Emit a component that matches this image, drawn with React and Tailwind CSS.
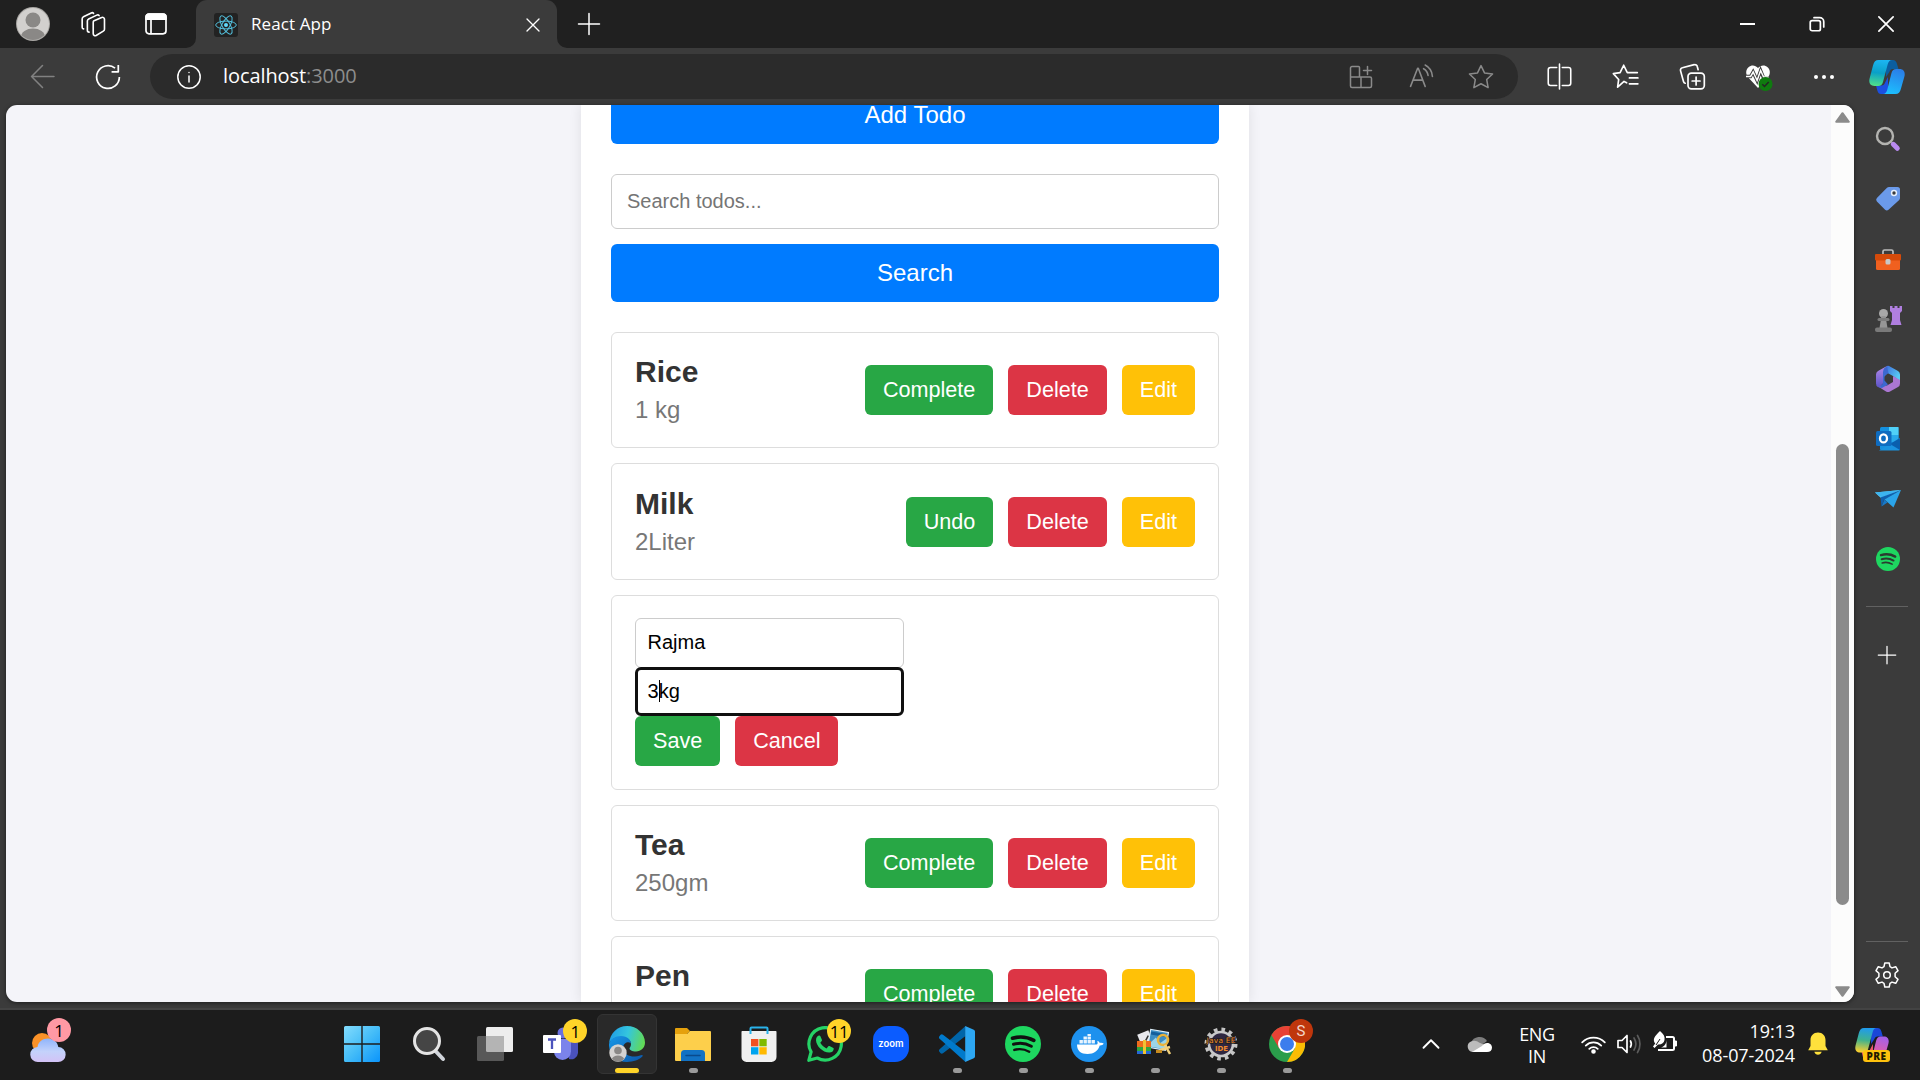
import React from "react";

/* ---------- line icons for the browser frame ---------- */

function Line({ size = 24, w = 1.5, className = "", children }) {
  return (
    <svg width={size} height={size} viewBox="0 0 24 24" fill="none" stroke="currentColor" strokeWidth={w} strokeLinecap="round" strokeLinejoin="round" className={"shrink-0 " + className}>
      {children}
    </svg>
  );
}

const Avatar = ({ size = 34 }) => (
  <svg width={size} height={size} viewBox="0 0 34 34" className="shrink-0">
    <defs>
      <clipPath id="avatarClip"><circle cx="17" cy="17" r="16" /></clipPath>
    </defs>
    <circle cx="17" cy="17" r="17" fill="#a9a7a4" />
    <circle cx="17" cy="17" r="16" fill="#d2d0ce" />
    <g clipPath="url(#avatarClip)" fill="#8a8886">
      <circle cx="17" cy="13" r="7.5" />
      <ellipse cx="17" cy="30" rx="12" ry="8.5" />
    </g>
  </svg>
);

const Workspaces = () => (
  <Line size={26} w={1.5}>
    <path d="M12.500 9.200 20 6a1.800 1.800 0 0 1 2.600 1.600v9.200c0 .8-.4 1.400-1.100 1.800l-6.600 4c-1.200.6-2.700 0-2.700-1.500V10.500c0-.6 0-1 .3-1.300z" />
    <path d="M8.400 19.500c-1 0-1.600-.7-1.600-1.700V9.300c0-.8.4-1.500 1.200-1.900L15.500 3.800c.8-.4 1.600-.2 2.100.4" />
    <path d="M3.300 16.500c-.8-.1-1.300-.7-1.300-1.600V7.300c0-.8.4-1.500 1.200-1.900l7.200-3.600c.8-.4 1.600-.2 2.100.4" />
  </Line>
);

const VerticalTabs = () => (
  <Line size={24} w={1.7}>
    <rect x="2" y="2.200" width="20" height="19.600" rx="3" />
    <path d="M2 5a3 3 0 0 1 3-2.800h14A3 3 0 0 1 22 5v2.200H2z" fill="currentColor" />
    <path d="M7 7v14.500" />
  </Line>
);

const ReactMark = () => (
  <svg width="24" height="24" viewBox="0 0 24 24" className="shrink-0">
    <rect width="24" height="24" rx="3" fill="#222222" />
    <g fill="none" stroke="#53c1de" strokeWidth="1">
      <ellipse cx="12" cy="12" rx="10.300" ry="3.900" />
      <ellipse cx="12" cy="12" rx="10.300" ry="3.900" transform="rotate(60 12 12)" />
      <ellipse cx="12" cy="12" rx="10.300" ry="3.900" transform="rotate(120 12 12)" />
    </g>
    <circle cx="12" cy="12" r="2" fill="#61dafb" />
  </svg>
);

const STAR = "M12 2.200l3 6.300 6.900.9-5 4.800 1.200 6.900L12 17.800l-6.100 3.300 1.200-6.900-5-4.800 6.900-.9z";

const HeartPulse = () => (
  <svg width="28" height="28" viewBox="0 0 28 28">
    <path d="M13 25 3.300 14.500C.4 11.300.6 6.700 3.500 4.200 6.500 1.500 10.400 2 13 5c2.600-3 6.700-3.500 9.600-.8 2.900 2.500 3 7.100.2 10.300z" fill="#fff" />
    <path d="M.5 13.500h5l2.600-4.500 4 8.500 3.500-10 3 7.500h7" fill="none" stroke="#3b3b3b" strokeWidth="3.400" />
    <path d="M1 13.500h4.600L8.200 9l3.900 8.500 3.500-10 3 6.500h5" fill="none" stroke="#fff" strokeWidth="1.500" />
    <circle cx="20.500" cy="21" r="7" fill="#0f7b0f" />
    <path d="M17.300 21.300l2.200 2.200 4.200-4.600" fill="none" stroke="#242424" strokeWidth="1.500" />
  </svg>
);

function CopilotMark({ size, id, colors, className = "" }) {
  return (
    <svg width={size} height={size} viewBox="0 0 36 36" className={"shrink-0 " + className}>
      <defs>
        <linearGradient id={id + "a"} x1=".5" y1="0" x2=".4" y2="1">
          <stop offset="0" stopColor={colors[0]} /><stop offset=".5" stopColor={colors[1]} /><stop offset="1" stopColor={colors[2]} />
        </linearGradient>
        <linearGradient id={id + "b"} x1=".6" y1="0" x2=".3" y2="1">
          <stop offset="0" stopColor={colors[3]} /><stop offset="1" stopColor={colors[4]} />
        </linearGradient>
      </defs>
      <path d="M17 1h7c2 0 3.200 1.300 3.800 3.300L29.500 10H24c-2 0-3 1.200-3.600 3L17 18z" fill={colors[5]} />
      <path d="M19 35h-7c-2 0-3-1.300-3.600-3.300L7 26.500h5.500c2 0 3-1.200 3.600-3L19 18z" fill={colors[6]} />
      <path d="M9.500 1H23c-2.400 0-3.500 1.700-4.200 4L14 23c-.7 2.600-2.200 4-4.800 4H5.500C1 27-.4 23.500.6 19.500L4 6.500C5 2.800 6.500 1 9.500 1z" fill={"url(#" + id + "a)"} />
      <path d="M26.500 35H14c2.400 0 3.500-1.700 4.200-4L22.500 14c.7-2.600 2.200-4 4.800-4h3.200c4.500 0 5.900 3.500 4.900 7.500L32 29.500C31 33.200 29.500 35 26.500 35z" fill={"url(#" + id + "b)"} />
    </svg>
  );
}

const SpotifyMark = ({ size, bar = "#1c1c1c" }) => (
  <svg width={size} height={size} viewBox="0 0 36 36" className="shrink-0">
    <circle cx="18" cy="18" r="18" fill="#1ed760" />
    <g fill="none" stroke={bar} strokeLinecap="round">
      <path d="M7.500 12.200c7-2 15-1.300 21.300 2.200" strokeWidth="3.600" />
      <path d="M8.500 18.300c6-1.700 12.500-1 17.800 2" strokeWidth="3" />
      <path d="M9.300 23.900c5-1.400 10.300-.8 14.900 1.800" strokeWidth="2.400" />
    </g>
  </svg>
);

/* ---------- browser chrome ---------- */

function TitleBar() {
  return (
    <div className="flex h-12 shrink-0 items-center bg-[#202020] text-white">
      <div className="flex w-[66px] justify-center"><Avatar /></div>
      <div className="flex w-[54px] justify-center"><Workspaces /></div>
      <div className="flex w-[72px] justify-center"><VerticalTabs /></div>
      <div className="relative ml-1 flex h-12 w-[361px] items-center rounded-t-[11px] bg-[#3b3b3b] pl-[18px] pr-[16px]">
        <svg width="10" height="10" viewBox="0 0 10 10" className="absolute -left-[10px] bottom-0"><path d="M10 0v10H0A10 10 0 0 0 10 0z" fill="#3b3b3b" /></svg>
        <svg width="10" height="10" viewBox="0 0 10 10" className="absolute -right-[10px] bottom-0"><path d="M0 0v10h10A10 10 0 0 1 0 0z" fill="#3b3b3b" /></svg>
        <div className="mt-[2px]"><ReactMark /></div>
        <span className="ml-[13px] text-[17px] leading-6 tracking-[0.1px]">React App</span>
        <Line size={16} w={2} className="ml-auto mt-[2px]"><path d="M3 3l18 18M21 3 3 21" /></Line>
      </div>
      <Line size={24} w={1.5} className="ml-[20px] mb-[1px]"><path d="M12 1.500v21M1.500 12h21" /></Line>
      <div className="ml-auto flex items-center">
        <div className="flex w-[69px] justify-center"><div className="h-[2px] w-[15px] bg-white" /></div>
        <div className="flex w-[69px] justify-center">
          <Line size={18} w={2.300}><rect x="3" y="7.500" width="13.500" height="13.500" rx="2.500" /><path d="M8 3.500h7.500a5.500 5.500 0 0 1 5.500 5.500v7" /></Line>
        </div>
        <div className="flex w-[69px] justify-center"><Line size={18} w={2.300}><path d="M2.500 2.500l19 19M21.500 2.500l-19 19" /></Line></div>
      </div>
    </div>
  );
}

function ToolBar() {
  return (
    <div className="flex h-[57px] shrink-0 items-center text-white">
      <div className="flex w-[84px] justify-center pb-[1px] text-[#818181]"><Line size={25}><path d="M23 12H1.500M12 1.500 1.500 12 12 22.500" /></Line></div>
      <div className="flex w-[48px] justify-center">
        <Line size={26} w={1.600}><path d="M22.500 12A10.500 10.500 0 1 1 18.500 3.800M21.500 1v6.200h-6.200" strokeLinecap="butt" /></Line>
      </div>
      <div className="ml-[18px] flex h-[45px] w-[1368px] items-center rounded-full bg-[#2b2b2b] pl-[27px]">
        <Line size={24} w={1.500}><circle cx="12" cy="12" r="11.200" /><path d="M12 11v6M12 7.500v.1" /></Line>
        <span className="-mt-[1px] ml-[22px] text-[20px] leading-6 tracking-[-0.08px]">localhost<span className="text-[#8d8d8d]">:3000</span></span>
        <div className="ml-auto flex items-center pr-[7px] text-[#8a8a8a]">
          <div className="flex w-[60px] justify-center">
            <Line size={24} w={1.500}><path d="M10.500 12V2.500a1 1 0 0 0-1-1H3a1.500 1.500 0 0 0-1.500 1.500v18A1.500 1.500 0 0 0 3 22.500h18a1.500 1.500 0 0 0 1.500-1.500v-7.500a1.500 1.500 0 0 0-1.500-1.500H1.500M12 12v10.500M18.500 1.500v8M14.500 5.500h8" /></Line>
          </div>
          <div className="flex w-[60px] justify-center">
            <Line size={25} w={1.500}><path d="M1.500 21.500 8.300 4h.6l6.600 17.500M4 15.500h9.200M14 4.500c2.600 1.400 3.900 3.400 4.300 6.500M15.500 1c4.200 2.200 6.700 6 7 11" /></Line>
          </div>
          <div className="flex w-[60px] justify-center"><Line size={28} w={1.300}><path d={STAR} /></Line></div>
        </div>
      </div>
      <div className="ml-[8px] flex items-center">
        <div className="flex w-[66px] justify-center"><Line size={27} w={1.400}><path d="M12 1v22M9.500 4H4a2 2 0 0 0-2 2v12a2 2 0 0 0 2 2h5.500M14.500 4H20a2 2 0 0 1 2 2v12a2 2 0 0 1-2 2h-5.500" /></Line></div>
        <div className="flex w-[67px] justify-center">
          <Line size={27} w={1.500}><path d="M13 17.600l-2.300-1.200L5 21.500l.9-6.800L1.200 9.500l6-1L10.400 2l3.200 6.500h8.900M15.500 13.300h7.500M15.500 18.500h7.500" /></Line>
        </div>
        <div className="flex w-[66px] justify-center">
          <Line size={27} w={1.500}><rect x="8" y="9" width="14.500" height="14" rx="3" /><path d="M15.200 12.500v7M11.700 16h7M17 6l-.7-2.700A2.200 2.200 0 0 0 13.500 1.500L3 4.200A2.200 2.200 0 0 0 1.400 7L4 16.500c.2.800.8 1.300 1.500 1.500" /></Line>
        </div>
        <div className="flex w-[68px] justify-center"><HeartPulse /></div>
        <div className="flex w-[62px] justify-center gap-[4px]">
          <i className="size-[4px] rounded-full bg-white" /><i className="size-[4px] rounded-full bg-white" /><i className="size-[4px] rounded-full bg-white" />
        </div>
        <div className="flex w-[64px] justify-center">
          <CopilotMark size={36} id="edgeCo" colors={["#1cb5f2", "#0aa0c8", "#4fe08a", "#2a7fe8", "#1cc0ff", "#0b5ea0", "#1c4fe0"]} />
        </div>
      </div>
    </div>
  );
}

/* ---------- side bar icons ---------- */

const sideIcons = [
  <svg width="26" height="26" viewBox="0 0 26 26">
    <path d="M15.500 15.500l3 3" stroke="#8a8a8a" strokeWidth="2" />
    <path d="M18.300 18.300l4 4" stroke="#b98af0" strokeWidth="5" strokeLinecap="round" />
    <circle cx="10" cy="10" r="8" fill="none" stroke="#b3b3b0" strokeWidth="2.400" />
  </svg>,
  <svg width="26" height="26" viewBox="0 0 26 26">
    <path d="M14 1h8.500A2.500 2.500 0 0 1 25 3.500V12c0 .8-.3 1.400-.8 2L13.500 23.700a2.500 2.500 0 0 1-3.400 0L1.900 15.500a2.500 2.500 0 0 1 0-3.400L12 1.800c.6-.5 1.200-.8 2-.8z" fill="#6b9aea" />
    <circle cx="19" cy="7" r="3.200" fill="#e6eefc" /><circle cx="19" cy="7" r="1.700" fill="#3b3b3b" />
  </svg>,
  <svg width="28" height="28" viewBox="0 0 28 28">
    <path d="M9 10V6.500A1.500 1.500 0 0 1 10.500 5h7A1.500 1.500 0 0 1 19 6.500V10" fill="none" stroke="#bdbdbd" strokeWidth="1.700" />
    <rect x="2" y="13" width="24" height="12" rx="1.500" fill="#f0601f" />
    <rect x="1" y="9" width="26" height="6.500" rx="1" fill="#d54a0a" />
    <rect x="11.500" y="14" width="5" height="5.500" rx="1.500" fill="#c8c8c8" />
  </svg>,
  <svg width="28" height="28" viewBox="0 0 28 28">
    <path d="M16 1h2.500v2h2V1h3v2h2V1H28v5l-2 2v7l1.500 5h-11l1.500-5V8l-2-2z" fill="#b07fe0" />
    <circle cx="9.500" cy="8.500" r="4.500" fill="#a8a8a8" /><path d="M7.500 11h4l2 12h-8z" fill="#969696" />
    <rect x="3.500" y="13" width="12" height="3" rx="1.500" fill="#7d7d7d" /><rect x="1" y="22.500" width="17" height="4.500" rx="2" fill="#7a7a7a" />
  </svg>,
  <svg width="28" height="28" viewBox="0 0 28 28">
    <defs>
      <linearGradient id="m1" x1="0" y1="0" x2="0" y2="1"><stop offset="0" stopColor="#b58ae8" /><stop offset="1" stopColor="#5c54c8" /></linearGradient>
      <linearGradient id="m2" x1="0" y1="0" x2="1" y2=".6"><stop offset="0" stopColor="#3a60d8" /><stop offset="1" stopColor="#58cdf5" /></linearGradient>
    </defs>
    <path d="M13 1q1-.5 2 0l9 5q2 1 2 3.500V16l-7-5-5.500-3L9 13z" fill="url(#m2)" />
    <path d="M2.500 20.500 12 26.500q2 1 4 0l8-4.500q2-1 2-3.500V15l-7-4v6l-6 3.500z" fill="#ab77d2" />
    <path d="M13 1 4 6Q2 7 2 9.500v9Q2 21 4 22l1 .5 4-4V8z" fill="url(#m1)" />
    <path d="M13 1 10 3.500Q9 5 9 8v10.500L5 22.500 8 23l6-3.500-3.500-4V11l4-3z" fill="#3c68d0" />
  </svg>,
  <svg width="26" height="26" viewBox="0 0 26 26">
    <rect x="5" y="1" width="18.500" height="23" rx="1.500" fill="#1490df" /><rect x="14" y="1" width="9.500" height="8" fill="#50d0f8" /><path d="M14 9h9.500v7H14z" fill="#28a8ea" />
    <path d="M4 24.500 25 12v11a1.500 1.500 0 0 1-1.500 1.500z" fill="#1a93e0" /><path d="M25 12v12L15 18z" fill="#0a5fae" />
    <rect x="1" y="5" width="15.500" height="15" rx="1.500" fill="#0f6cc0" />
    <ellipse cx="8.500" cy="12.400" rx="3.500" ry="4" fill="none" stroke="#fff" strokeWidth="2.300" />
  </svg>,
  <svg width="28" height="28" viewBox="0 0 28 28">
    <path d="M1 7.500 27 5 8 14z" fill="#5fd0fa" /><path d="M1 7.500 27 5 7.500 12.500z" fill="#3cb4f0" />
    <path d="M6.500 12.500 27 5 10 15l-2.500 6.500z" fill="#0f5fae" /><path d="M10.500 14.500 27 5l-7.500 17.500z" fill="#2aa4ea" /><path d="M7.500 21.500l3-7 3 3z" fill="#1779c8" />
  </svg>,
  <SpotifyMark size={24} bar="#2b3b30" />,
];

function SideBar() {
  return (
    <div className="flex w-[42px] shrink-0 flex-col items-center pt-[4px] text-white">
      {sideIcons.map((icon, i) => (
        <div key={i} className="flex h-[60px] items-center pl-[1px] last:pl-0">{icon}</div>
      ))}
      <div className="mt-[17px] h-px w-full bg-[#616161]" />
      <Line size={20} w={1.500} className="mt-[38px]"><path d="M12 1.500v21M1.500 12h21" /></Line>
      <div className="mt-auto h-px w-full bg-[#616161]" />
      <svg width="28" height="28" viewBox="0 0 28 28" fill="none" stroke="#fff" strokeWidth="1.500" strokeLinejoin="round" className="mt-[19px] mb-[13px] shrink-0">
        <path d="M11.800 2h4.400l.8 3.700 2 1.200 3.700-1.200 2.300 3.900-2.900 2.700v3.400l2.900 2.700-2.300 3.900L19 21.100l-2 1.200-.8 3.700h-4.400l-.8-3.700-2-1.200-3.700 1.200L3 18.400l2.900-2.700v-3.400L3 9.600l2.300-3.900L9 6.900l2-1.200z" />
        <circle cx="14" cy="14" r="3.300" />
      </svg>
    </div>
  );
}

/* ---------- todo app ---------- */

const TONES = {
  green: "bg-[#28a745]",
  red: "bg-[#dc3545]",
  yellow: "bg-[#ffc107]",
};

function ActionButton({ tone, children }) {
  return (
    <button className={"h-[50px] rounded-[6px] px-[18px] text-[21.600px] leading-[50px] text-white " + TONES[tone]}>
      {children}
    </button>
  );
}

function TodoItem({ title, amount, done }) {
  return (
    <li className={"flex shrink-0 items-center justify-between rounded-[6px] border border-[#dddddd] px-[23px] " + (done ? "h-[117px]" : "h-[116px]")}>
      <div className="mb-[2px]">
        <h3 className="text-[30px] font-bold leading-[34px] text-[#333333]">{title}</h3>
        <p className="mt-[7px] h-[27px] text-[24px] leading-[27px] text-[#777777]">{amount}</p>
      </div>
      <div className="flex gap-[15px]">
        <ActionButton tone="green">{done ? "Undo" : "Complete"}</ActionButton>
        <ActionButton tone="red">Delete</ActionButton>
        <ActionButton tone="yellow">Edit</ActionButton>
      </div>
    </li>
  );
}

function TodoEditor() {
  return (
    <li className="flex h-[195px] shrink-0 flex-col rounded-[6px] border border-[#dddddd] px-[23px] pt-[22px]">
      <div className="h-[50px] w-[269px] rounded-[6px] border border-[#cccccc] px-[11.500px] text-[20px] leading-[47px] text-black">Rajma</div>
      <div className="relative -mt-[1px] flex h-[49px] w-[269px] items-center rounded-[6px] border-[3px] border-[#101010] bg-white px-[9.500px] pb-[2px] text-[20px] leading-[22px] text-black">
        3<span className="-mr-px h-[22px] w-px bg-black" />kg
      </div>
      <div className="flex gap-[15px]">
        <ActionButton tone="green">Save</ActionButton>
        <ActionButton tone="red">Cancel</ActionButton>
      </div>
    </li>
  );
}

function TodoApp() {
  return (
    <main className="ml-[575px] flex h-full w-[668px] flex-col bg-white px-[30px] font-['Liberation_Sans',Arial,sans-serif] shadow-[0_0_12px_rgba(0,0,0,0.09)]">
      <button className="-mt-[19px] h-[58px] shrink-0 rounded-[6px] bg-[#007bff] text-[24px] leading-[58px] text-white">Add Todo</button>
      <div className="mt-[30px] h-[55px] shrink-0 rounded-[6px] border border-[#cccccc] px-[15px] text-[20px] leading-[52px] text-[#757575]">Search todos...</div>
      <button className="mt-[15px] h-[58px] shrink-0 rounded-[6px] bg-[#007bff] text-[24px] leading-[58px] text-white">Search</button>
      <ul className="mt-[30px] flex flex-col gap-[15px]">
        <TodoItem title="Rice" amount="1 kg" />
        <TodoItem title="Milk" amount="2Liter" done />
        <TodoEditor />
        <TodoItem title="Tea" amount="250gm" />
        <TodoItem title="Pen" />
      </ul>
    </main>
  );
}

function PageView() {
  return (
    <div className="flex h-[897px] w-[1848px] shrink-0 overflow-hidden rounded-[11px] bg-[#f4f4f9] shadow-[0_1px_4px_rgba(0,0,0,0.5)]">
      <div className="h-full flex-1 overflow-hidden"><TodoApp /></div>
      <div className="flex w-[23px] flex-col items-center bg-[#fcfcfc]">
        <svg width="15" height="11" viewBox="0 0 15 11" className="mt-[7px] shrink-0"><path d="M7.500 1.200 13.800 9.800H1.200z" fill="#8b8b8b" stroke="#8b8b8b" strokeWidth="2" strokeLinejoin="round" /></svg>
        <div className="mt-[321px] h-[461px] w-[13px] shrink-0 rounded-full bg-[#8b8b8b]" />
        <svg width="15" height="11" viewBox="0 0 15 11" className="mt-auto mb-[5px] shrink-0"><path d="M7.500 9.800 1.200 1.200h12.600z" fill="#8b8b8b" stroke="#8b8b8b" strokeWidth="2" strokeLinejoin="round" /></svg>
      </div>
    </div>
  );
}

/* ---------- task bar ---------- */

const Weather = () => (
  <svg width="36" height="32" viewBox="0 0 36 32">
    <defs>
      <linearGradient id="cloud" x1="0" y1="0" x2="0" y2="1"><stop offset="0" stopColor="#8fb4fb" /><stop offset=".55" stopColor="#c4d2fb" /><stop offset="1" stopColor="#d3c2f6" /></linearGradient>
    </defs>
    <circle cx="12" cy="11" r="10" fill="#fb9228" />
    <path d="M8 30a7.500 7.500 0 0 1-.5-15C8.500 9.500 12.500 6.500 18 6.500s9.500 3.500 10.300 8.500A7.500 7.500 0 0 1 28 30z" fill="url(#cloud)" />
  </svg>
);

const Windows = () => (
  <svg width="36" height="36" viewBox="0 0 36 36" className="-ml-[2px]">
    <defs><linearGradient id="win" gradientUnits="userSpaceOnUse" x1="0" y1="0" x2="36" y2="36"><stop offset="0" stopColor="#83dcfd" /><stop offset=".5" stopColor="#45bdf8" /><stop offset="1" stopColor="#0a94fb" /></linearGradient></defs>
    <path d="M1.500 0h15.800v17.300H0V1.500A1.500 1.500 0 0 1 1.500 0zM18.700 0h15.800A1.500 1.500 0 0 1 36 1.500v15.800H18.700zM0 18.700h17.300V36H1.500A1.500 1.500 0 0 1 0 34.500zM18.700 18.700H36v15.800a1.500 1.500 0 0 1-1.500 1.500H18.700z" fill="url(#win)" />
  </svg>
);

const SearchGlass = () => (
  <svg width="36" height="36" viewBox="0 0 36 36">
    <path d="M24.500 25l7.500 8" stroke="#d0d4da" strokeWidth="4" strokeLinecap="round" />
    <circle cx="16" cy="15" r="12.500" fill="#454545" stroke="#e4e4e4" strokeWidth="3" />
  </svg>
);

const TaskView = () => (
  <svg width="36" height="36" viewBox="0 0 36 36">
    <rect x="9" y="1" width="27" height="25" rx="1.500" fill="#ededed" />
    <rect x="0" y="10" width="27" height="25" rx="1.500" fill="#585858" />
    <path d="M9 10h18v16H10.500A1.500 1.500 0 0 1 9 24.500z" fill="#b4b4b4" />
  </svg>
);

const Teams = () => (
  <svg width="36" height="36" viewBox="0 0 36 36">
    <circle cx="20" cy="7" r="5.500" fill="#6a70de" />
    <path d="M26 15h9v12a7 7 0 0 1-9 6z" fill="#4a52bd" />
    <path d="M11 13h17v12.500a8.500 8.500 0 0 1-17 0z" fill="#7b83eb" />
    <rect x="0" y="9" width="18" height="18" rx="1" fill="#fff" />
    <path d="M5 13.500h8M9 13.500V23" stroke="#4b53bc" strokeWidth="2.300" fill="none" />
  </svg>
);

const Edge = () => (
  <svg width="36" height="36" viewBox="0 0 36 36">
    <defs>
      <linearGradient id="ed1" x1="0" y1=".3" x2="1" y2=".5"><stop offset="0" stopColor="#1f9be6" /><stop offset=".5" stopColor="#34c6de" /><stop offset="1" stopColor="#62da55" /></linearGradient>
      <linearGradient id="ed2" x1="0" y1="0" x2="1" y2="1"><stop offset="0" stopColor="#1798e8" /><stop offset="1" stopColor="#0b56a8" /></linearGradient>
    </defs>
    <path d="M0 18C.8 7 8.500 0 18 0c10 0 18 7.500 18 16.500 0 5.500-4.200 9-9 9-4 0-6.500-1.500-6.500-3 0-1 1.500-1.800 1.500-4.500 0-4-4-7-9.500-7C6 11 1.500 13.500 0 18z" fill="url(#ed1)" />
    <path d="M0 18c1.500-5 6-8 12-8 6.500 0 10 4 10 8 0-3-8-3-8 4.500 0 6 7.500 8.500 12 8 3.500-.3 5.500-1.500 7-1.500.8 0 1 .8.3 1.600C30 34 24.500 36 18 36 8 36-.5 28 0 18z" fill="url(#ed2)" />
    <g transform="translate(0 18)"><circle cx="9" cy="9" r="8.700" fill="#d5d3d1" /><circle cx="9" cy="6.500" r="3.800" fill="#8a8886" /><path d="M2.800 15a6.500 5 0 0 1 12.400 0 8.700 8.700 0 0 1-12.400 0z" fill="#8a8886" /></g>
  </svg>
);

const Explorer = () => (
  <svg width="36" height="36" viewBox="0 0 36 36">
    <path d="M0 3a1 1 0 0 1 1-1h11l3 3-3 3H0z" fill="#e5a10c" />
    <path d="M0 8h12l3-3h20a1 1 0 0 1 1 1v28a1 1 0 0 1-1 1H1a1 1 0 0 1-1-1z" fill="#fdcf4b" />
    <path d="M6 35V27.500A3.500 3.500 0 0 1 9.500 24h17a3.500 3.500 0 0 1 3.500 3.500V35z" fill="#1272c4" />
    <path d="M11 29.500h14" stroke="#0a4a8c" strokeWidth="1.500" strokeLinecap="round" />
  </svg>
);

const Store = () => (
  <svg width="36" height="36" viewBox="0 0 36 36">
    <path d="M9.500 7V2.500a1 1 0 0 1 1-1h15a1 1 0 0 1 1 1V7" fill="none" stroke="#29b2ea" strokeWidth="2" />
    <path d="M.5 5.500A.8.8 0 0 1 1.300 5h33.400a.8.8 0 0 1 .8.800V31a5 5 0 0 1-5 5h-25a5 5 0 0 1-5-5z" fill="#f0f0f0" />
    <path d="M10 13h7.400v7.300H10z" fill="#f25022" /><path d="M18.300 13h7.400v7.300h-7.400z" fill="#7fba00" />
    <path d="M10 21.200h7.400v7.300H10z" fill="#00a4ef" /><path d="M18.300 21.200h7.400v7.300h-7.400z" fill="#ffb900" />
    <path d="M8.500 5h2V8h-2zM25.500 5h2V8h-2z" fill="#29b2ea" />
  </svg>
);

const WhatsApp = () => (
  <svg width="36" height="36" viewBox="0 0 36 36">
    <path d="M1.800 34.300l2.300-8.400A16.200 16.200 0 1 1 10.300 32z" fill="none" stroke="#25d366" strokeWidth="3.200" strokeLinejoin="round" />
    <path d="M12 9.500c.8 0 1.200.2 1.500.9l1.400 3.300c.2.700.1 1-.4 1.600l-1.200 1.500c1.500 2.700 3.400 4.400 6.200 5.600l1.700-2c.4-.5.8-.5 1.300-.3l3.400 1.600c.6.300.9.600.8 1.300-.3 2.300-2 3.700-4.500 3.600C15.500 26.300 9.300 20 9 14.200c-.1-2.500 1.500-4.600 3-4.700z" fill="#25d366" />
  </svg>
);

const Zoom = () => (
  <div className="flex size-[36px] items-center justify-center rounded-[14px] bg-[#0b5cff]">
    <span className="font-[Inter,sans-serif] text-[9.500px] font-semibold leading-none text-white">zoom</span>
  </div>
);

const VsCode = () => (
  <svg width="36" height="36" viewBox="0 0 36 36">
    <path d="M26.500 0v10L4 27.200a2 2 0 0 1-2.400 0L.6 26a2 2 0 0 1 0-2.800z" fill="#0065a9" />
    <path d="M26.500 36V26L4 8.800a2 2 0 0 0-2.400 0L.6 10a2 2 0 0 0 0 2.800z" fill="#007acc" />
    <path d="M26.200 0 34.800 3.800A2 2 0 0 1 36 5.600v24.800a2 2 0 0 1-1.200 1.800L26.200 36z" fill="#2da7f3" />
  </svg>
);

const Docker = () => (
  <svg width="36" height="36" viewBox="0 0 36 36">
    <circle cx="18" cy="18" r="18" fill="#1d91ee" />
    <path d="M6 18.500h19.500c1.300 0 1.300-1.800.8-3.800 1.500.4 2.200 1.300 2.400 2.300 1.500-.4 2.800-.2 4 .6-.9 1.500-2.200 2-4 1.900C27 25 23 28 16.500 28 10 28 6 25 6 18.500z" fill="#fff" />
    <path d="M8.500 14h3.400v3.500H8.500zM12.500 14h3.400v3.500h-3.400zM16.500 14h3.400v3.500h-3.400zM20.500 14h3.400v3.500h-3.400zM12.500 10.500h3.400v3h-3.400zM16.500 10.500h3.400v3h-3.400zM16.500 8h3.400v2h-3.400z" fill="#e9f4fe" />
  </svg>
);

const PhotoTools = () => (
  <svg width="36" height="36" viewBox="0 0 36 36">
    <g transform="rotate(-22 8 12)"><rect x="2" y="6" width="12" height="15" fill="#e8e8ec" /><path d="M6 16l6-5" stroke="#333" strokeWidth="1.500" /></g>
    <g transform="rotate(10 22 14)"><rect x="12" y="5" width="18" height="18" fill="#3d8ec4" stroke="#dff0fa" strokeWidth="1.200" /><path d="M12.500 20l6-8 5 5 6-6v11h-17z" fill="#9bd5e8" /><path d="M13 7h14v3H13z" fill="#145f9c" /></g>
    <rect x="0" y="15" width="14" height="6" fill="#ee6b1c" /><rect x="0" y="21" width="14" height="4" fill="#2fa63c" /><rect x="0" y="25" width="14" height="3" fill="#2567d8" /><rect x="6" y="14" width="3" height="14" fill="#f1c232" />
    <circle cx="26" cy="14" r="5" fill="none" stroke="#e9b33a" strokeWidth="2.500" /><path d="M28 19l5 9M23 24l10-3" stroke="#f2d07a" strokeWidth="2.500" /><path d="M19 24h6v3h-6z" fill="#c78b1e" />
  </svg>
);

const JavaEE = () => (
  <svg width="36" height="36" viewBox="0 0 36 36">
    <circle cx="18" cy="18" r="14.500" fill="none" stroke="#c4c4c4" strokeWidth="4" strokeDasharray="3.600 3.992" />
    <circle cx="18" cy="18" r="12" fill="#2e2740" stroke="#c9c9c9" strokeWidth="2.600" />
    <text x="18" y="17" textAnchor="middle" textLength="29" fontFamily="DejaVu Sans, sans-serif" fontSize="7.500" fill="#f08a2c" stroke="#1c1c1c" strokeWidth="1.500" paintOrder="stroke">Java EE</text>
    <text x="18.500" y="24.500" textAnchor="middle" fontFamily="DejaVu Sans, sans-serif" fontSize="7" fontWeight="bold" fill="#f08a2c">IDE</text>
  </svg>
);

const Chrome = () => (
  <svg width="36" height="36" viewBox="0 0 36 36">
    <circle cx="18" cy="18" r="18" fill="#2a9d4b" />
    <path d="M2.400 9A18 18 0 0 1 33.600 9H18z" fill="#e94235" /><path d="M2.400 9 10.200 22.500 18 9z" fill="#e94235" />
    <path d="M33.600 9A18 18 0 0 1 18 36l7.800-13.500L18 9z" fill="#fbbc04" />
    <circle cx="18" cy="18" r="9" fill="#fff" /><circle cx="18" cy="18" r="7" fill="#3b7ded" />
  </svg>
);

const apps = [
  { icon: <Windows /> },
  { icon: <SearchGlass /> },
  { icon: <TaskView /> },
  { icon: <Teams />, badge: "1" },
  { icon: <Edge />, active: true },
  { icon: <Explorer />, running: true },
  { icon: <Store /> },
  { icon: <WhatsApp />, badge: "11" },
  { icon: <Zoom /> },
  { icon: <VsCode />, running: true },
  { icon: <SpotifyMark size={36} bar="#111111" />, running: true },
  { icon: <Docker />, running: true },
  { icon: <PhotoTools />, running: true },
  { icon: <JavaEE />, running: true },
  { icon: <Chrome />, running: true, profile: "S" },
];

function AppButton({ icon, badge, active, running, profile }) {
  return (
    <div className="flex w-[66px] justify-center">
      <div className={"relative flex h-[60px] w-[60px] items-center justify-center rounded-[6px] " + (active ? "border border-[#343434] bg-[#292929]" : "")}>
        {icon}
        {badge && <span className="absolute right-[4px] top-[5px] flex size-[24px] items-center justify-center rounded-full bg-[#ffd429] text-[17px] leading-none tracking-[-0.5px] text-black">{badge}</span>}
        {profile && <span className="absolute right-[4px] top-[5px] flex size-[24px] items-center justify-center rounded-full bg-[#bf360c] font-[Roboto,sans-serif] text-[15px] leading-none text-[#f3d5ca]">{profile}</span>}
        {active && <span className="absolute bottom-0 h-[5px] w-[24px] rounded-full bg-[#ffd429]" />}
        {running && <span className="absolute bottom-[1px] h-[5px] w-[9px] rounded-full bg-[#9a9a9a]" />}
      </div>
    </div>
  );
}

function TaskBar() {
  return (
    <footer className="flex h-[70px] shrink-0 items-start bg-[#1c1c1c] pt-[4px] text-white">
      <div className="relative ml-[30px] mt-[18px] w-[36px]">
        <Weather />
        <span className="absolute -top-[14px] left-[17px] flex size-[24px] items-center justify-center rounded-full bg-[#ff99a4] text-[17px] leading-none text-black">1</span>
      </div>
      <div className="ml-[264px] flex">
        {apps.map((app, i) => <AppButton key={i} {...app} />)}
      </div>
      <div className="ml-auto flex h-[60px] items-center">
        <Line size={18} w={2.500}><path d="M2 17 12 7l10 10" /></Line>
        <svg width="26" height="18" viewBox="0 0 26 18" className="ml-[27px]">
          <path d="M4 8a9 9 0 0 1 16-2l-8 6z" fill="#7d7d7d" /><path d="M5.500 17A5.500 5.500 0 0 1 4 6.500c3-1.500 6-.8 8 1l7 3L6 17z" fill="#bcbcbc" /><path d="M5 17l10-6c3-5 10-3.500 10 1.500 0 3-2 4.500-5 4.500z" fill="#fff" />
        </svg>
        <div className="ml-[24px] mt-[2px] w-[40px] text-center text-[18px] leading-[22.500px] tracking-[-0.4px]">ENG<br />IN</div>
        <svg width="25" height="19" viewBox="0 0 25 19" fill="none" stroke="#fff" strokeWidth="1.800" strokeLinecap="round" className="ml-[24px]">
          <path d="M1.200 7.300a16 16 0 0 1 22.600 0M4.800 10.600a11 11 0 0 1 15.400 0M8.300 13.800a6 6 0 0 1 8.400 0" /><circle cx="12.500" cy="16.500" r="1.400" fill="#fff" />
        </svg>
        <svg width="26" height="22" viewBox="0 0 26 22" fill="none" stroke="#fff" strokeWidth="1.700" strokeLinecap="round" strokeLinejoin="round" className="ml-[10px]">
          <path d="M2 7.500h4l5-5v17l-5-5H2z" /><path d="M14.500 8c1 1.800 1 4.200 0 6" /><path d="M18 5c2.200 3.500 2.200 8.500 0 12M21.500 2.500c3.300 5 3.300 12 0 17" stroke="#5c5c5c" />
        </svg>
        <svg width="26" height="22" viewBox="0 0 26 22" className="ml-[10px] -mt-[4px]">
          <path d="M14 6h6.500A1.500 1.500 0 0 1 22 7.500v10a1.500 1.500 0 0 1-1.500 1.500H6" fill="none" stroke="#fff" strokeWidth="2" /><path d="M23 10h1.500v5H23z" fill="#fff" stroke="#fff" />
          <path d="M14.500 9v7.500H9c4-1.500 5.300-4 5.500-7.500z" fill="#fff" />
          <path d="M8 0c3.500 3 5.200 5.500 4.500 9-.6 3-3 4.800-6.500 4.500L2.500 17 1 15.500l2.200-3C0 8 3 5 8 0z" fill="#fff" /><path d="M4 14l4-6" stroke="#1c1c1c" strokeWidth="1" />
        </svg>
        <div className="-mt-[2px] ml-[19px] w-[98px] whitespace-nowrap text-right text-[18px] leading-[24px] tracking-[-0.1px]">19:13<br />08-07-2024</div>
        <svg width="20" height="24" viewBox="0 0 20 24" className="ml-[13px]">
          <path d="M10 .5c4.500 0 7.500 3.400 7.500 7.500v6l2.300 4.300H.2L2.500 14V8C2.500 3.900 5.500.5 10 .5zM6.300 19.800h7.400c-.6 2-2 3-3.700 3s-3.100-1-3.700-3z" fill="#ffe13c" />
        </svg>
        <div className="relative ml-[27px] mr-[30px] h-[34px] w-[35px]">
          <CopilotMark size={34} id="winCo" colors={["#1f9af0", "#3fb28e", "#ffd02c", "#a560e8", "#ff5d86", "#1a47d8", "#f25a6a"]} />
          <span className="absolute left-[8px] top-[23px] flex h-[12px] w-[27px] items-center justify-center rounded-[3px] bg-[#ffc20e] text-[10px] font-extrabold leading-none tracking-[0.5px] text-[#221a00]">PRE</span>
        </div>
      </div>
    </footer>
  );
}

export default function App() {
  return (
    <div className="flex h-[1080px] w-[1920px] flex-col overflow-hidden bg-[#3b3b3b] font-['Open_Sans','Noto_Sans',sans-serif]">
      <TitleBar />
      <ToolBar />
      <div className="flex h-[905px] shrink-0 border-b-2 border-[#434343] pl-[6px]">
        <PageView />
        <div className="ml-[12px] flex h-[897px]"><SideBar /></div>
      </div>
      <TaskBar />
    </div>
  );
}
